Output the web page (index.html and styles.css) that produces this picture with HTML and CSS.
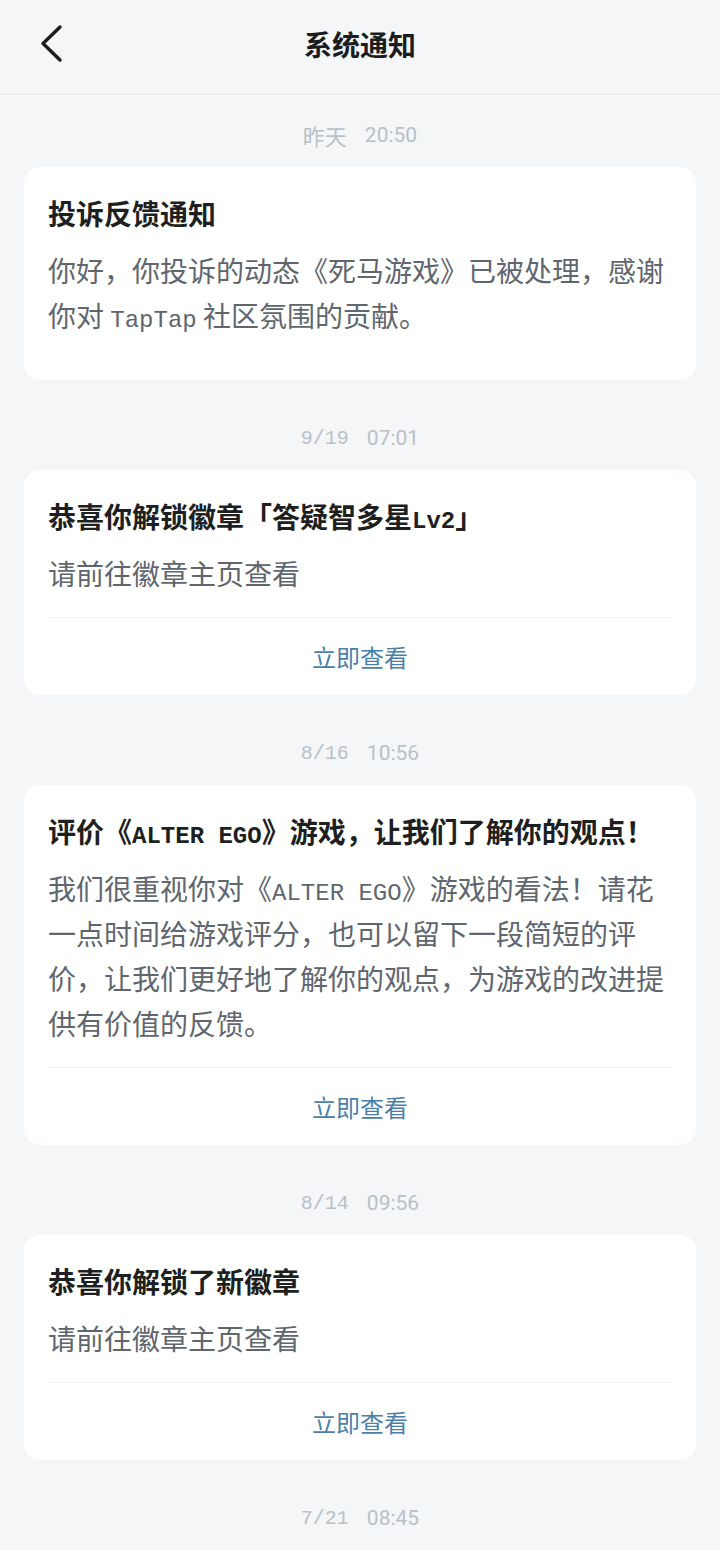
FILE: index.html
```html
<!DOCTYPE html>
<html lang="zh-CN">
<head>
<meta charset="utf-8">
<title>系统通知</title>
<link rel="stylesheet" href="styles.css">
</head>
<body>
<header class="topbar">
  <div class="topbar-left">
    <svg class="back" width="24" height="40" viewBox="0 0 24 40" aria-hidden="true">
      <path d="M20 3 L3 19.5 L20 36" fill="none" stroke="#1b1c1e" stroke-width="3.4" stroke-linecap="round" stroke-linejoin="round"/>
    </svg>
  </div>
  <h1 class="topbar-title">系统通知</h1>
  <div class="topbar-right"></div>
</header>

<main class="list">
  <section class="group">
    <div class="stamp"><span class="stamp-date cjk">昨天</span><span class="stamp-time">20:50</span></div>
    <article class="card">
      <div class="card-body card-body--plain">
        <h2 class="card-title">投诉反馈通知</h2>
        <p class="card-text">你好，你投诉的动态《死马游戏》已被处理，感谢你对 <span class="en">TapTap</span> 社区氛围的贡献。</p>
      </div>
    </article>
  </section>

  <section class="group">
    <div class="stamp"><span class="stamp-date">9/19</span><span class="stamp-time">07:01</span></div>
    <article class="card">
      <div class="card-body">
        <h2 class="card-title">恭喜你解锁徽章「答疑智多星<span class="en">Lv2</span>」</h2>
        <p class="card-text">请前往徽章主页查看</p>
      </div>
      <div class="card-action">立即查看</div>
    </article>
  </section>

  <section class="group">
    <div class="stamp"><span class="stamp-date">8/16</span><span class="stamp-time">10:56</span></div>
    <article class="card">
      <div class="card-body">
        <h2 class="card-title">评价《<span class="en">ALTER EGO</span>》游戏，让我们了解你的观点！</h2>
        <p class="card-text">我们很重视你对《<span class="en">ALTER EGO</span>》游戏的看法！请花一点时间给游戏评分，也可以留下一段简短的评价，让我们更好地了解你的观点，为游戏的改进提供有价值的反馈。</p>
      </div>
      <div class="card-action">立即查看</div>
    </article>
  </section>

  <section class="group">
    <div class="stamp"><span class="stamp-date">8/14</span><span class="stamp-time">09:56</span></div>
    <article class="card">
      <div class="card-body">
        <h2 class="card-title">恭喜你解锁了新徽章</h2>
        <p class="card-text">请前往徽章主页查看</p>
      </div>
      <div class="card-action">立即查看</div>
    </article>
  </section>

  <section class="group">
    <div class="stamp"><span class="stamp-date">7/21</span><span class="stamp-time">08:45</span></div>
    <article class="card">
      <div class="card-body">
        <h2 class="card-title">恭喜你解锁了新徽章</h2>
        <p class="card-text">请前往徽章主页查看</p>
      </div>
      <div class="card-action">立即查看</div>
    </article>
  </section>
</main>
</body>
</html>
```

FILE: styles.css
```css
* {
  box-sizing: border-box;
}

html, body {
  margin: 0;
  padding: 0;
  background: #f4f6f8;
}

body {
  font-family: "Noto Sans CJK SC", "Noto Sans", sans-serif;
  color: #1e1f21;
  width: 720px;
}

.topbar {
  height: 95px;
  display: grid;
  grid-template-columns: 1fr auto 1fr;
  align-items: center;
  border-bottom: 1px solid #e6e9ec;
  padding-bottom: 6px;
}

.topbar-left {
  display: flex;
  align-items: center;
  padding-left: 40px;
}

.back {
  display: block;
}

.topbar-title {
  margin: 0;
  font-size: 28px;
  font-weight: 700;
  line-height: 40px;
  color: #1b1c1e;
}

.list {
  padding: 20px 24px 0;
}

.group + .group {
  margin-top: 38px;
}

.stamp {
  height: 40px;
  display: flex;
  justify-content: center;
  align-items: center;
  gap: 18px;
  color: #b9c0c8;
  margin-bottom: 12px;
}

.stamp-date {
  font-family: "Liberation Mono", monospace;
  font-size: 20px;
}

.stamp-date.cjk {
  font-family: "Noto Sans CJK SC", sans-serif;
  font-size: 22px;
}

.stamp-time {
  font-family: Roboto, "Liberation Sans", sans-serif;
  font-size: 21px;
}

.card {
  background: #ffffff;
  border-radius: 16px;
  padding: 0 24px;
}

.card-body {
  padding-top: 28px;
  padding-bottom: 21px;
  border-bottom: 1px solid #eef0f2;
}

.card-body--plain {
  padding-bottom: 42px;
  border-bottom: none;
}

.card-title {
  margin: 0;
  font-size: 28px;
  line-height: 36px;
  font-weight: 700;
  color: #1e1f21;
}

.card-text {
  margin: 17px 0 0;
  font-size: 28px;
  line-height: 45px;
  color: #60666e;
  font-weight: 400;
}

.en {
  font-family: "Liberation Mono", monospace;
  font-size: 24px;
  line-height: 1;
}

.card-action {
  height: 77px;
  display: flex;
  align-items: center;
  justify-content: center;
  font-size: 24px;
  color: #4c7fa7;
}
```
